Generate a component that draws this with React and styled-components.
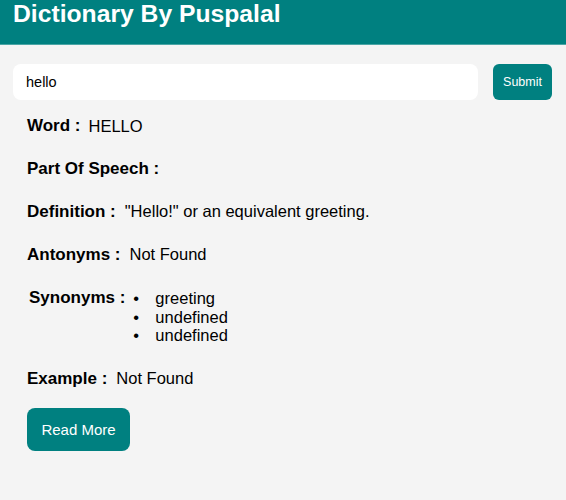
import styled, { createGlobalStyle } from "styled-components"

const GlobalStyle = createGlobalStyle`
    body {
        margin: 0;
        background-color: #f4f4f4;
        font-family: Arial, "Liberation Sans", sans-serif;
        color: #000;
    }
`

const synonyms = ["greeting", "undefined", "undefined"]

export default function App() {
    return (
        <>
        <GlobalStyle />
        <Header>
            <Title>Dictionary By Puspalal</Title>
        </Header>

        <Main>
            <SearchForm onSubmit={(e) => e.preventDefault()}>
                <SearchInput defaultValue="hello" />
                <SubmitButton type="submit">Submit</SubmitButton>
            </SearchForm>

            <Details>
                <Row>
                    <Label>Word :</Label>
                    <Value>HELLO</Value>
                </Row>
                <Row>
                    <Label>Part Of Speech :</Label>
                </Row>
                <Row>
                    <Label>Definition :</Label>
                    <Value $raise>"Hello!" or an equivalent greeting.</Value>
                </Row>
                <Row>
                    <Label>Antonyms :</Label>
                    <Value $raise>Not Found</Value>
                </Row>
                <ListRow>
                    <Label $indent>Synonyms :</Label>
                    <SynonymList>
                        {synonyms.map((s, i) => <li key={i}>{s}</li>)}
                    </SynonymList>
                </ListRow>
                <Row>
                    <Label>Example :</Label>
                    <Value $raise>Not Found</Value>
                </Row>
                <ReadMore>Read More</ReadMore>
            </Details>
        </Main>
        </>
    )
}

const Header = styled.header`
    height: 44px;
    background-color: #008080;
    display: flex;
    align-items: flex-start;
    padding: 0 13px;
    border-bottom: 1px solid #4aa5a5;
`

const Title = styled.h1`
    margin: 0;
    font-size: 24.7px;
    line-height: 28px;
    font-weight: bold;
    color: white;
`

const Main = styled.main`
    padding: 19px 14px 0 13px;
`

const SearchForm = styled.form`
    display: flex;
    align-items: center;
    gap: 15px;
`

const SearchInput = styled.input`
    flex: 1;
    height: 36px;
    box-sizing: border-box;
    border: none;
    outline: none;
    border-radius: 8px;
    background: white;
    padding: 0 13px;
    font-family: Arial, "Liberation Sans", sans-serif;
    font-size: 14.5px;
    color: #000;
`

const SubmitButton = styled.button`
    height: 36px;
    width: 59px;
    border: none;
    border-radius: 6px;
    background-color: #008080;
    color: white;
    font-family: Arial, "Liberation Sans", sans-serif;
    font-size: 12.5px;
    padding: 0;
`

const Details = styled.section`
    display: flex;
    flex-direction: column;
    align-items: flex-start;
    gap: 25.1px;
    padding: 17px 14px 0;
`

const Row = styled.div`
    display: flex;
    align-items: center;
    gap: 8px;
    line-height: 18px;
`

const ListRow = styled.div`
    display: flex;
    align-items: flex-start;
    gap: 9px;
    line-height: 18px;
`

const Label = styled.span`
    font-weight: bold;
    font-size: 17px;
    margin-left: ${props => props.$indent ? "2px" : "0"};
`

const Value = styled.span`
    font-size: 16.5px;
    position: relative;
    top: ${props => props.$raise ? "-1px" : "0"};
    margin-left: ${props => props.$raise ? "1px" : "0"};
`

const SynonymList = styled.ul`
    margin: 0;
    padding: 0;
    list-style: none;
    font-size: 16.5px;
    line-height: 18.5px;

    li::before {
        content: "•";
        display: inline-block;
        width: 22px;
        margin-left: -1px;
    }
`

const ReadMore = styled.button`
    margin-top: -5px;
    width: 103px;
    height: 43px;
    border: none;
    border-radius: 8px;
    background-color: #008080;
    color: white;
    font-family: Arial, "Liberation Sans", sans-serif;
    font-size: 15px;
    padding: 0;
`
